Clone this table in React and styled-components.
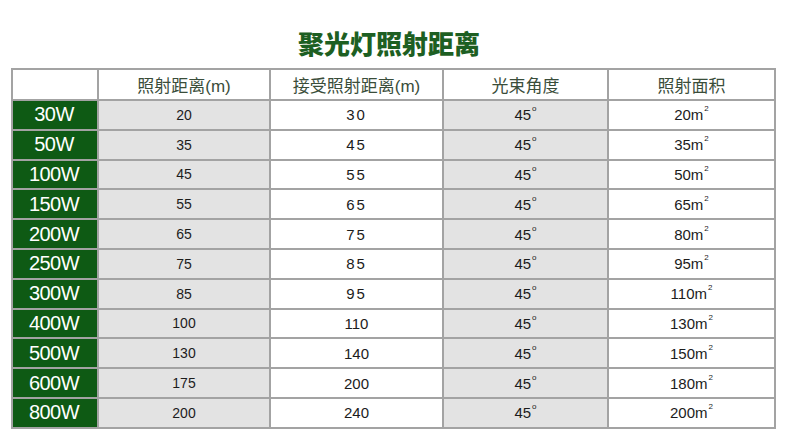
import React from 'react';
import styled, { createGlobalStyle } from 'styled-components';

const GlobalStyle = createGlobalStyle`
  html, body {
    margin: 0;
    padding: 0;
    background: #ffffff;
  }
  body {
    font-family: "Liberation Sans", Arial, "Noto Sans CJK SC", sans-serif;
  }
`;

const Page = styled.div`
  width: 790px;
  height: 436px;
  padding-top: 30px;
  box-sizing: border-box;
  overflow: hidden;
`;

const Title = styled.h1`
  margin: 0 0 12px;
  padding-right: 12px;
  height: 26px;
  line-height: 26px;
  text-align: center;
  font-family: "Noto Sans CJK SC", sans-serif;
  font-size: 26px;
  font-weight: 900;
  color: #1d5f22;
`;

const Table = styled.table`
  margin-left: 11px;
  width: 763px;
  border-collapse: collapse;
  table-layout: fixed;
  border: 2px solid #a3a3a3;
`;

const HeadCell = styled.th`
  height: 29px;
  padding: 0;
  border: 2px solid #a3a3a3;
  background: #ffffff;
  font-family: "Liberation Sans", "Noto Sans CJK SC", sans-serif;
  font-weight: 400;
  font-size: 17px;
  color: #3a4d3a;
  text-align: center;
`;

const Label = styled.td`
  height: 27.8px;
  padding: 0 2px 0 0;
  border: 2px solid #a3a3a3;
  background: #0e5a14;
  color: #ffffff;
  font-size: 20px;
  letter-spacing: -0.5px;
  text-align: center;
`;

const Cell = styled.td`
  padding: 0;
  border: 2px solid #a3a3a3;
  background: ${({ $shade }) => ($shade ? '#e3e3e3' : '#ffffff')};
  color: #1c1c1c;
  font-size: ${({ $size }) => $size || 14}px;
  letter-spacing: ${({ $spaced }) => ($spaced ? '2px' : '0')};
  text-align: center;
`;

const Sup = styled.sup`
  font-size: 8px;
  vertical-align: top;
  position: relative;
  top: -2px;
  margin-left: 1px;
`;

const rows = [
  ['30W', 20, 30, 20],
  ['50W', 35, 45, 35],
  ['100W', 45, 55, 50],
  ['150W', 55, 65, 65],
  ['200W', 65, 75, 80],
  ['250W', 75, 85, 95],
  ['300W', 85, 95, 110],
  ['400W', 100, 110, 130],
  ['500W', 130, 140, 150],
  ['600W', 175, 200, 180],
  ['800W', 200, 240, 200],
];

export default function App() {
  return (
    <Page>
      <GlobalStyle />
      <Title>聚光灯照射距离</Title>
      <Table>
        <colgroup>
          <col style={{ width: 86 }} />
          <col style={{ width: 172 }} />
          <col style={{ width: 173 }} />
          <col style={{ width: 165 }} />
          <col style={{ width: 167 }} />
        </colgroup>
        <thead>
          <tr>
            <HeadCell />
            <HeadCell>照射距离(m)</HeadCell>
            <HeadCell>接受照射距离(m)</HeadCell>
            <HeadCell>光束角度</HeadCell>
            <HeadCell>照射面积</HeadCell>
          </tr>
        </thead>
        <tbody>
          {rows.map(([watt, dist, recv, area]) => (
            <tr key={watt}>
              <Label>{watt}</Label>
              <Cell $shade $size={14}>{dist}</Cell>
              <Cell $size={15} $spaced={recv < 100}>{recv}</Cell>
              <Cell $shade $size={15}>45<Sup>o</Sup></Cell>
              <Cell $size={15}>{area}m<Sup>2</Sup></Cell>
            </tr>
          ))}
        </tbody>
      </Table>
    </Page>
  );
}
